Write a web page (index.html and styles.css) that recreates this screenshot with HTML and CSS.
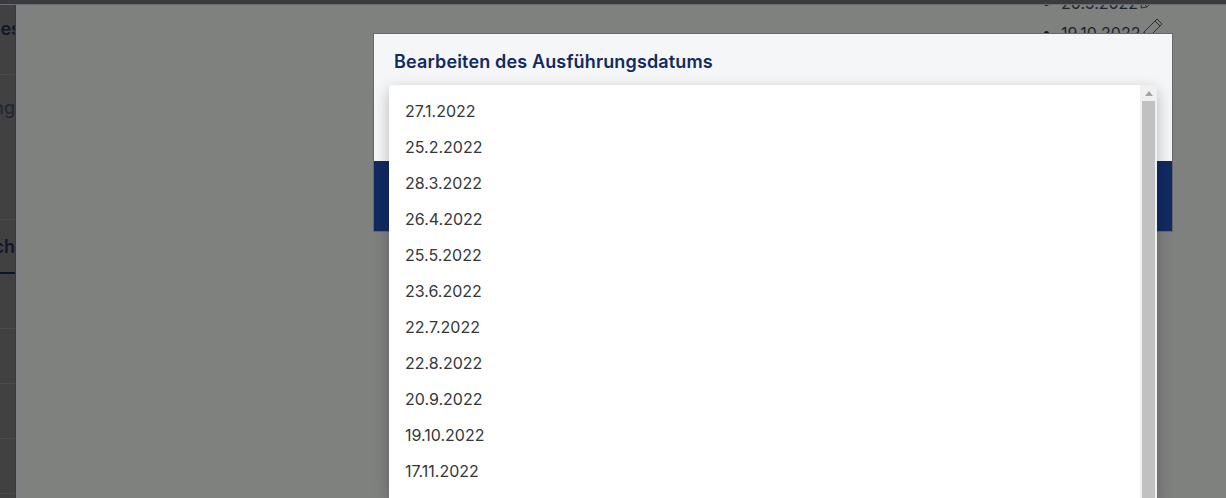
FILE: index.html
```html
<!DOCTYPE html>
<html lang="de">
<head>
<meta charset="utf-8">
<title>Bearbeiten des Ausführungsdatums</title>
<link rel="stylesheet" href="styles.css">
</head>
<body>
<div class="app">
  <div class="topbar"></div>
  <div class="content">
    <aside class="side">
      <div class="side-row side-row-a"><span class="side-strong side-cut">Anfragendaues</span></div>
      <div class="side-row side-row-b"><span class="side-light">Bearbeitung</span></div>
      <div class="side-row side-row-c"><span class="side-strong">Nach</span></div>
      <div class="side-row side-row-d"></div>
      <div class="side-row side-row-d"></div>
      <div class="side-row side-row-d"></div>
    </aside>
    <main class="main">
      <ul class="dates">
        <li><span>20.5.2022</span><svg class="pencil" viewBox="0 0 24 24"><path d="M3 22l1-6L17 3l5 5L9 21z M15 5l5 5 M4 16l5 5"/></svg></li>
        <li><span>19.10.2022</span><svg class="pencil" viewBox="0 0 24 24"><path d="M3 22l1-6L17 3l5 5L9 21z M15 5l5 5 M4 16l5 5"/></svg></li>
      </ul>
    </main>
  </div>
</div>
<section class="modal">
  <header class="modal-head"><h2 class="modal-title">Bearbeiten des Ausführungsdatums</h2></header>
  <div class="modal-foot"></div>
</section>
<div class="dropdown">
  <ul class="options">
    <li class="option">27.1.2022</li>
    <li class="option">25.2.2022</li>
    <li class="option">28.3.2022</li>
    <li class="option">26.4.2022</li>
    <li class="option">25.5.2022</li>
    <li class="option">23.6.2022</li>
    <li class="option">22.7.2022</li>
    <li class="option">22.8.2022</li>
    <li class="option">20.9.2022</li>
    <li class="option">19.10.2022</li>
    <li class="option">17.11.2022</li>
  </ul>
  <div class="scrollbar">
    <div class="scroll-arrow"></div>
    <div class="scroll-thumb"></div>
  </div>
</div>
</body>
</html>
```
FILE: styles.css
```css
html, body {
  margin: 0;
  height: 100%;
  overflow: hidden;
  font-family: Inter, "Liberation Sans", sans-serif;
}
.app {
  display: flex;
  flex-direction: column;
  height: 498px;
  background: #7f817f;
}
.topbar {
  height: 5px;
  flex: none;
  background: #3a3b3f;
  border-bottom: 1px solid #6c6d6e;
  box-sizing: border-box;
}
.content {
  flex: 1;
  display: flex;
  min-height: 0;
}
.side {
  width: 16px;
  flex: none;
  background: #404140;
  border-right: 1px solid #383938;
  box-sizing: border-box;
  overflow: hidden;
  display: flex;
  flex-direction: column;
  align-items: flex-end;
}
.side-row {
  width: 200px;
  flex: none;
  display: flex;
  justify-content: flex-end;
  align-items: flex-start;
  border-bottom: 1px solid #4a4b4a;
  box-sizing: border-box;
  font-size: 18px;
  line-height: 24px;
  white-space: nowrap;
}
.side-row-a { height: 70px; padding-top: 12px; }
.side-row-b { height: 145px; padding-top: 21px; }
.side-row-c { height: 109px; padding-top: 15px; position: relative; }
.side-row-d { height: 55px; align-items: center; }
.side-strong { color: #12162a; font-weight: 600; }
.side-cut { margin-right: -6px; }
.side-light { color: #1f252d; }
.side-row-c::after {
  content: "";
  position: absolute;
  left: 0;
  right: 0;
  top: 52px;
  height: 2px;
  background: #0e1430;
}
.main {
  flex: 1;
  min-width: 0;
  overflow: hidden;
  display: flex;
  justify-content: flex-end;
  background: linear-gradient(90deg, #7f8082 0, #7f817f 16px);
}
.dates {
  margin: -17px 32px 0 0;
  padding: 0;
  list-style: none;
  width: 150px;
  font-size: 16px;
  color: #1b2330;
}
.dates li {
  position: relative;
  height: 30px;
  line-height: 30px;
  padding-left: 17px;
  display: flex;
  align-items: center;
  white-space: nowrap;
}
.dates li::before {
  content: "";
  position: absolute;
  left: 0;
  top: 13px;
  width: 5px;
  height: 5px;
  border-radius: 50%;
  background: #10182a;
}
.pencil {
  width: 24px;
  height: 24px;
  margin-top: -10px;
  fill: none;
  stroke: #2b2f33;
  stroke-width: 1;
}
.modal {
  position: absolute;
  left: 373px;
  top: 33px;
  width: 798px;
  height: 197px;
  border: 1px solid #66686b;
  display: flex;
  flex-direction: column;
}
.modal-head {
  height: 127px;
  flex: none;
  background: #f5f6f8;
  padding: 16px 20px 0;
  box-sizing: border-box;
}
.modal-title {
  margin: 0;
  font-size: 18px;
  letter-spacing: 0.15px;
  line-height: 24px;
  font-weight: 600;
  color: #112a61;
}
.modal-foot {
  flex: 1;
  background: #112a61;
}
.dropdown {
  position: absolute;
  left: 389px;
  top: 85px;
  width: 768px;
  height: 413px;
  background: #fff;
  border-radius: 4px 4px 0 0;
  box-shadow: 0 5px 15px rgba(0, 0, 0, 0.25);
  display: flex;
  overflow: hidden;
}
.options {
  flex: 1;
  margin: 0;
  padding: 8px 0 0;
  list-style: none;
}
.option {
  height: 36px;
  line-height: 36px;
  padding-left: 16px;
  font-size: 16px;
  color: #33363a;
}
.scrollbar {
  width: 17px;
  flex: none;
  background: #f0f0f0;
  padding: 0 2px;
  box-sizing: border-box;
}
.scroll-arrow {
  width: 0;
  height: 0;
  margin: 6px auto 5px;
  border-left: 4px solid transparent;
  border-right: 4px solid transparent;
  border-bottom: 5px solid #a3a3a3;
}
.scroll-thumb {
  height: 400px;
  background: #c1c1c1;
}
```
